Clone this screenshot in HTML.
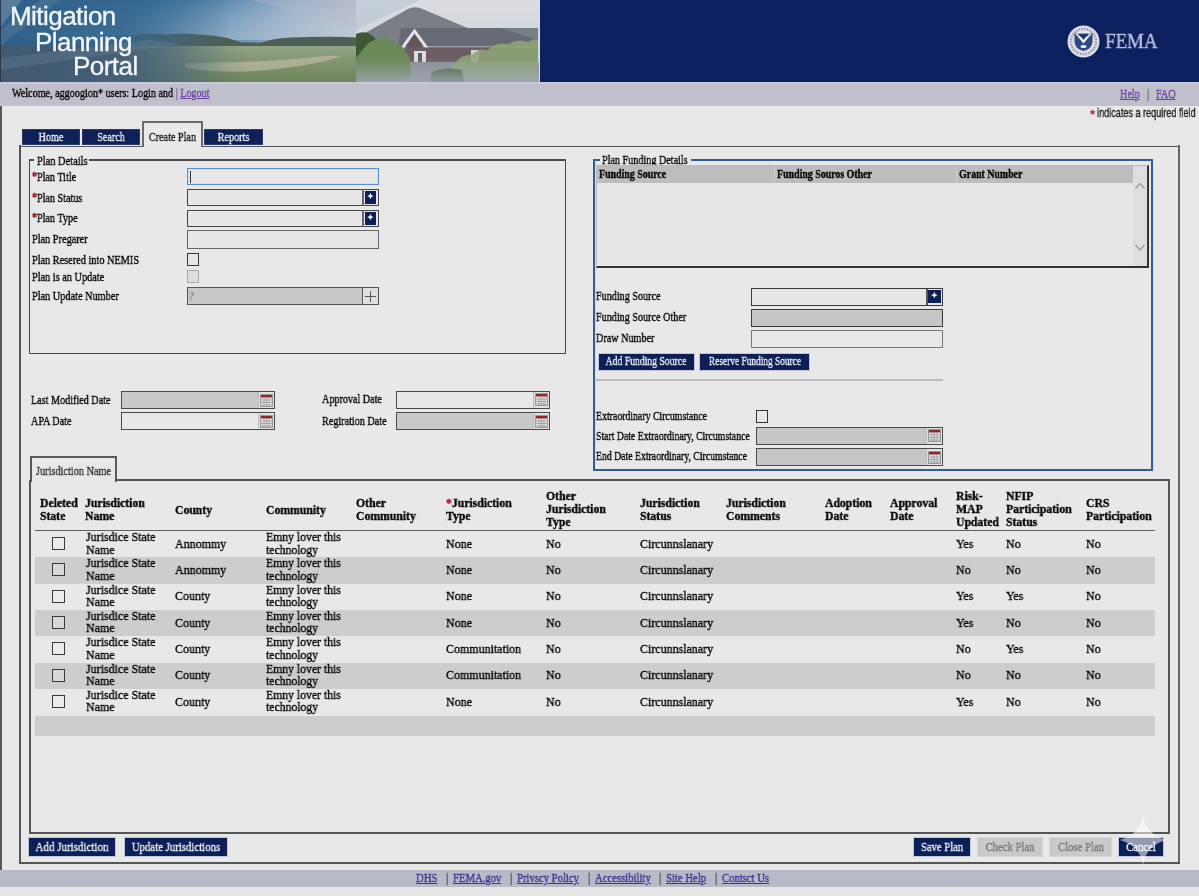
<!DOCTYPE html><html><head><meta charset="utf-8"><title>Mitigation Planning Portal</title><style>
*{margin:0;padding:0;box-sizing:border-box}
html,body{width:1199px;height:896px;overflow:hidden;background:#e8e8e8;position:relative}
.t{position:absolute;white-space:nowrap;line-height:13px;transform-origin:0 0;-webkit-text-stroke:0.35px currentColor;will-change:transform}
.b{position:absolute}
a{color:inherit}
</style></head><body><div class="b" style="left:0;top:0;width:1199px;height:82px;background:#0c2060"></div>
<svg class="b" style="left:0;top:0" width="540" height="82" viewBox="0 0 540 82">
<defs>
<linearGradient id="sky" x1="0" y1="0" x2="1" y2="0">
<stop offset="0" stop-color="#23618e"/><stop offset="0.4" stop-color="#2f6e9c"/><stop offset="0.62" stop-color="#5a88ae"/><stop offset="0.82" stop-color="#93adc4"/><stop offset="1" stop-color="#b2bccb"/></linearGradient>
<linearGradient id="skyv" x1="0" y1="0" x2="0" y2="1">
<stop offset="0" stop-color="#ffffff" stop-opacity="0"/><stop offset="1" stop-color="#c8d2dc" stop-opacity="0.45"/></linearGradient>
<linearGradient id="field" x1="0" y1="0" x2="0" y2="1">
<stop offset="0" stop-color="#94a486"/><stop offset="0.4" stop-color="#839670"/><stop offset="1" stop-color="#6c845a"/></linearGradient>
<linearGradient id="leftshade" x1="0" y1="0" x2="1" y2="0">
<stop offset="0" stop-color="#2e5f88" stop-opacity="1"/><stop offset="0.55" stop-color="#36668e" stop-opacity="0.85"/><stop offset="1" stop-color="#3c6a90" stop-opacity="0"/></linearGradient>
<linearGradient id="leftbot" x1="0" y1="0" x2="1" y2="0">
<stop offset="0" stop-color="#45576c" stop-opacity="0.85"/><stop offset="0.55" stop-color="#4a5c6c" stop-opacity="0.6"/><stop offset="1" stop-color="#5a6a70" stop-opacity="0"/></linearGradient>
<linearGradient id="hsky" x1="0" y1="0" x2="0" y2="1">
<stop offset="0" stop-color="#dcdde2"/><stop offset="1" stop-color="#c3cfd6"/></linearGradient>
<linearGradient id="fog" x1="0" y1="0" x2="0" y2="1">
<stop offset="0" stop-color="#9aa2aa" stop-opacity="0"/><stop offset="1" stop-color="#a0a8b0" stop-opacity="0.85"/></linearGradient>
</defs>
<rect x="0" y="0" width="356" height="82" fill="url(#sky)"/>
<rect x="0" y="0" width="356" height="40" fill="url(#skyv)"/>
<path d="M110 36 Q122 34 135 35 Q150 33 165 34.5 Q185 33 200 34.5 Q215 35 228 38 Q236 41 242 42.5 L262 42.5 Q272 38.5 290 37.5 Q320 36.5 345 37 L356 37.5 L356 46 L110 46 Z" fill="#4e5f55"/>
<path d="M250 0 L356 0 L356 30 Q320 16 250 0 Z" fill="#b8b8cc" opacity="0.3"/>
<rect x="100" y="46" width="256" height="36" fill="url(#field)"/>
<path d="M185 63 Q250 63 305 58 Q330 55 342 56 Q310 67 255 71 Q215 73 185 68 Z" fill="#bdbaa4" opacity="0.7"/>
<rect x="0" y="0" width="230" height="82" fill="url(#leftshade)"/>
<rect x="0" y="46" width="250" height="36" fill="url(#leftbot)"/>
<path d="M0 0 L22 0 L0 28 Z" fill="#8aa0b4" opacity="0.45"/>
<path d="M0 30 L40 0 L60 0 L0 46 Z" fill="#7e97ad" opacity="0.25"/>
<path d="M0 58 L150 40 L180 44 L0 70 Z" fill="#8aa4ba" opacity="0.18"/>
<rect x="356" y="0" width="184" height="82" fill="url(#hsky)"/>
<path d="M356 0 L420 0 L356 30 Z" fill="#a8bccb" opacity="0.45"/>
<path d="M356 38 L408 9 Q414 6 420 8 L470 29 L538 29 L538 82 L356 82 Z" fill="#7a7e85"/>
<path d="M401 28 L538 28 L538 47 L398 47 Z" fill="#666a74"/>
<path d="M500 28 L538 28 L538 40 Z" fill="#7c8a8c" opacity="0.7"/>
<rect x="398" y="46" width="140" height="1.5" fill="#9a9ca4"/>
<path d="M400 48.5 L414.5 28.5 L429 48.5 L425.5 48.5 L414.5 33.5 L403.5 48.5 Z" fill="#e4e6ea"/>
<path d="M406 48 L414.5 34.5 L423 48 Z" fill="#6a5256"/>
<rect x="405" y="47.5" width="133" height="16" fill="#6c5e64"/>
<rect x="414" y="51" width="12" height="15" fill="#dcdce2"/>
<rect x="418" y="53" width="4" height="12" fill="#5a5e6a"/>
<rect x="471" y="50" width="8" height="13" fill="#d4d4da"/>
<rect x="356" y="62" width="184" height="20" fill="#8c929c"/>
<path d="M356 34 Q362 31 368 33 Q376 36 378 46 Q380 56 374 64 Q366 70 356 70 Z" fill="#3e5836"/>
<path d="M364 48 Q370 40 380 38 Q388 36 394 42 Q402 44 406 52 Q412 58 410 66 Q414 74 404 82 L356 82 L356 58 Z" fill="#6a8858"/>
<path d="M456 62 Q462 54 472 55 Q478 48 488 50 Q496 42 508 44 Q518 38 528 42 Q534 38 538 40 L538 82 L452 82 Q448 70 456 62 Z" fill="#8ea676" opacity="0.85"/>
<path d="M432 72 Q446 66 462 70 L464 82 L430 82 Z" fill="#44603c"/>
<rect x="356" y="58" width="184" height="24" fill="url(#fog)"/>
<rect x="539" y="0" width="1" height="82" fill="#d8dce8"/>
</svg>
<div class="b" style="left:0;top:0;width:1px;height:82px;background:#2a3a4a"></div>
<div class="t" style="left:10px;top:3px;font-size:26px;font-weight:400;color:#f2f5f8;font-family:'Liberation Sans',serif;transform:scaleX(1);line-height:26px;letter-spacing:-0.55px;">Mitigation</div>
<div class="t" style="left:35px;top:28.5px;font-size:26px;font-weight:400;color:#f2f5f8;font-family:'Liberation Sans',serif;transform:scaleX(1);line-height:26px;letter-spacing:-0.55px;">Planning</div>
<div class="t" style="left:73px;top:53px;font-size:26px;font-weight:400;color:#f2f5f8;font-family:'Liberation Sans',serif;transform:scaleX(1);line-height:26px;letter-spacing:-0.55px;">Portal</div>
<svg class="b" style="left:1067px;top:24.5px" width="33" height="33" viewBox="0 0 33 33">
<circle cx="16.5" cy="16.5" r="16" fill="#dde2ec"/>
<circle cx="16.5" cy="16.5" r="12.6" fill="none" stroke="#a89aa6" stroke-width="2.6" stroke-dasharray="1.6 1.1"/>
<circle cx="16.5" cy="16" r="9.8" fill="#e6e8f0"/>
<path d="M7.5 8.5 L25.5 8.5 L25.5 17 Q25 24 16.5 26 Q8 24 7.5 17 Z" fill="#2c4a80"/>
<path d="M8.5 9 L16.5 18.5 L24.5 9 L21.8 8.5 L16.5 15 L11.2 8.5 Z" fill="#f2f4f8"/>
<path d="M10 9.5 L23 9.5 L16.5 13 Z" fill="#1c2f60"/>
<ellipse cx="16.5" cy="21.5" rx="3" ry="1.6" fill="#eef0f6"/>
</svg>
<div class="t" style="left:1105px;top:31px;font-size:21px;font-weight:400;color:#b9c1d9;font-family:'Liberation Serif',serif;transform:scaleX(0.9);line-height:21px;">FEMA</div>
<div class="b" style="left:0px;top:82px;width:1199px;height:24px;background:#bfc0cb"></div>
<div class="b" style="left:0px;top:82px;width:1199px;height:2px;background:#c5c9d9"></div>
<div class="t" style="left:12px;top:86px;font-size:13px;font-weight:400;color:#000;font-family:'Liberation Serif',serif;transform:scaleX(0.78);">Welcome, aggoogion* users: Login and <span style="color:#6a5a9a">|</span> <u style="color:#6b3fa0">Logout</u></div>
<div class="t" style="left:1120px;top:87px;font-size:13px;font-weight:400;color:#000;font-family:'Liberation Serif',serif;transform:scaleX(0.78);"><u style="color:#6b3fa0">Help</u></div>
<div class="t" style="left:1147px;top:87px;font-size:13px;font-weight:400;color:#000;font-family:'Liberation Serif',serif;transform:scaleX(0.78);"><span style="color:#555">|</span></div>
<div class="t" style="left:1156px;top:87px;font-size:13px;font-weight:400;color:#000;font-family:'Liberation Serif',serif;transform:scaleX(0.78);"><u style="color:#6b3fa0">FAQ</u></div>
<div class="b" style="left:0px;top:106px;width:2px;height:780px;background:#5a5a5a"></div>
<div class="t" style="left:1090px;top:107px;font-size:13px;font-weight:400;color:#000;font-family:'Liberation Serif',serif;transform:scaleX(0.78);"><span style="color:#a01828">*</span></div>
<div class="t" style="left:1097px;top:106px;font-size:13px;font-weight:400;color:#1a1a1a;font-family:'Liberation Sans',serif;transform:scaleX(0.7);">indicates a required field</div>
<div class="b" style="left:22px;top:128.8px;width:58px;height:16.69999999999999px;background:#0e2157;border:1px solid #2a3a6a"></div>
<div class="t" style="left:22px;top:130px;width:58px;text-align:center;font-size:13px;color:#e8ecf4;font-family:'Liberation Serif',serif;transform:scaleX(0.78);transform-origin:50% 0">Home</div>
<div class="b" style="left:82px;top:128.8px;width:58px;height:16.69999999999999px;background:#0e2157;border:1px solid #2a3a6a"></div>
<div class="t" style="left:82px;top:130px;width:58px;text-align:center;font-size:13px;color:#e8ecf4;font-family:'Liberation Serif',serif;transform:scaleX(0.78);transform-origin:50% 0">Search</div>
<div class="b" style="left:204px;top:128.8px;width:59px;height:16.69999999999999px;background:#0e2157;border:1px solid #2a3a6a"></div>
<div class="t" style="left:204px;top:130px;width:59px;text-align:center;font-size:13px;color:#e8ecf4;font-family:'Liberation Serif',serif;transform:scaleX(0.78);transform-origin:50% 0">Reports</div>
<div class="b" style="left:142px;top:121px;width:61px;height:26px;background:#e9e9e9;border:2px solid #6a6a6a;border-bottom:none"></div>
<div class="t" style="left:142px;top:130px;width:61px;text-align:center;font-size:13px;color:#1a1a1a;font-family:'Liberation Serif',serif;transform:scaleX(0.78);transform-origin:50% 0">Create Plan</div>
<div class="b" style="left:19px;top:145.5px;width:123px;height:1.5px;background:#555"></div>
<div class="b" style="left:203px;top:145.5px;width:977px;height:1.5px;background:#555"></div>
<div class="b" style="left:19px;top:145px;width:2px;height:719px;background:#555"></div>
<div class="b" style="left:1178px;top:145px;width:2px;height:719px;background:#666"></div>
<div class="b" style="left:19px;top:862px;width:1161px;height:2px;background:#555"></div>
<div class="b" style="left:29px;top:160px;width:537px;height:193.5px;border:1.7px solid #4a4a4a;border-top:none"></div>
<div class="b" style="left:29px;top:159px;width:5px;height:2px;background:#4a4a4a"></div>
<div class="b" style="left:89px;top:159.3px;width:477px;height:1.6999999999999886px;background:#4a4a4a"></div>
<div class="t" style="left:37px;top:154px;font-size:13px;font-weight:400;color:#000;font-family:'Liberation Serif',serif;transform:scaleX(0.8);">Plan Details</div>
<div class="t" style="left:31.5px;top:169px;font-size:13px;font-weight:700;color:#000;font-family:'Liberation Serif',serif;transform:scaleX(0.8);"><span style="color:#8a1828">*</span></div>
<div class="t" style="left:37px;top:170px;font-size:13px;font-weight:400;color:#000;font-family:'Liberation Serif',serif;transform:scaleX(0.78);">Plan Title</div>
<div class="t" style="left:31.5px;top:189.5px;font-size:13px;font-weight:700;color:#000;font-family:'Liberation Serif',serif;transform:scaleX(0.8);"><span style="color:#8a1828">*</span></div>
<div class="t" style="left:37px;top:190.5px;font-size:13px;font-weight:400;color:#000;font-family:'Liberation Serif',serif;transform:scaleX(0.78);">Plan Status</div>
<div class="t" style="left:31.5px;top:210px;font-size:13px;font-weight:700;color:#000;font-family:'Liberation Serif',serif;transform:scaleX(0.8);"><span style="color:#8a1828">*</span></div>
<div class="t" style="left:37px;top:211px;font-size:13px;font-weight:400;color:#000;font-family:'Liberation Serif',serif;transform:scaleX(0.78);">Plan Type</div>
<div class="t" style="left:31.8px;top:231.6px;font-size:13px;font-weight:400;color:#000;font-family:'Liberation Serif',serif;transform:scaleX(0.79);">Plan Pregarer</div>
<div class="t" style="left:31.8px;top:252.5px;font-size:13px;font-weight:400;color:#000;font-family:'Liberation Serif',serif;transform:scaleX(0.79);">Plan Resered into NEMIS</div>
<div class="t" style="left:31.8px;top:269.5px;font-size:13px;font-weight:400;color:#000;font-family:'Liberation Serif',serif;transform:scaleX(0.79);">Plan is an Update</div>
<div class="t" style="left:31.8px;top:288.5px;font-size:13px;font-weight:400;color:#000;font-family:'Liberation Serif',serif;transform:scaleX(0.79);">Plan Update Number</div>
<div class="b" style="left:187px;top:168px;width:192px;height:17px;border:1px solid #5b8fd0;box-shadow:inset 0 0 0 1px #cfe0f4;background:#e8e8e8"></div>
<div class="b" style="left:190px;top:171px;width:1px;height:12px;background:#333"></div>
<div class="b" style="left:187px;top:189px;width:192px;height:17px;border:1.6px solid #444;background:#e6e6e6"></div>
<div class="b" style="left:362px;top:189px;width:1.5px;height:17px;background:#666"></div>
<div class="b" style="left:365px;top:191px;width:11px;height:13px;background:#0d1f57"></div>
<div class="t" style="left:365px;top:193px;width:11px;text-align:center;font-size:8px;line-height:8px;color:#fff;font-family:'Liberation Sans'">&#10022;</div>
<div class="b" style="left:187px;top:209.5px;width:192px;height:17.5px;border:1.6px solid #444;background:#e6e6e6"></div>
<div class="b" style="left:362px;top:209.5px;width:1.5px;height:17.5px;background:#666"></div>
<div class="b" style="left:365px;top:211.5px;width:11px;height:13.5px;background:#0d1f57"></div>
<div class="t" style="left:365px;top:213.5px;width:11px;text-align:center;font-size:8px;line-height:8px;color:#fff;font-family:'Liberation Sans'">&#10022;</div>
<div class="b" style="left:187px;top:230px;width:192px;height:18.5px;border:1px solid #666;background:#e6e6e6"></div>
<div class="b" style="left:187px;top:253px;width:12px;height:13px;border:1.5px solid #333;background:#e8e8e8"></div>
<div class="b" style="left:187px;top:270px;width:12px;height:13px;border:1px solid #aaa;background:#dedede"></div>
<div class="b" style="left:187px;top:287px;width:192px;height:18px;border:1px solid #555;background:#c8c8c8"></div>
<div class="b" style="left:362px;top:287px;width:17px;height:18px;border:1px solid #555;background:#e0e0e0"></div>
<div class="t" style="left:189px;top:290px;font-size:12px;font-weight:400;color:#888;font-family:'Liberation Serif',serif;transform:scaleX(0.8);font-style:italic">?</div>
<div class="b" style="left:365px;top:296px;width:11px;height:1px;background:#555"></div>
<div class="b" style="left:370px;top:291px;width:1px;height:11px;background:#555"></div>
<div class="t" style="left:30.5px;top:392.6px;font-size:13px;font-weight:400;color:#000;font-family:'Liberation Serif',serif;transform:scaleX(0.78);">Last Modified Date</div>
<div class="t" style="left:30.5px;top:413.6px;font-size:13px;font-weight:400;color:#000;font-family:'Liberation Serif',serif;transform:scaleX(0.78);">APA Date</div>
<div class="b" style="left:121px;top:391px;width:154px;height:17.5px;border:1.5px solid #4a4a4a;background:#c8c8c8"></div>
<div class="b" style="left:258px;top:392px;width:16px;height:15.5px;background:#e2e2e2;border-left:1px solid #bbb"></div>
<svg class="b" style="left:260px;top:393.5px" width="13" height="13" viewBox="0 0 13 13">
<rect x="0.5" y="0.5" width="12" height="12" fill="#e4e4e4" stroke="#999" stroke-width="1"/>
<rect x="1" y="1" width="11" height="2.5" fill="#8a2a30"/>
<path d="M1 6 H12 M1 8.5 H12 M1 11 H12 M4 3.5 V12 M6.5 3.5 V12 M9 3.5 V12" stroke="#999" stroke-width="0.8"/>
</svg>
<div class="b" style="left:121px;top:412px;width:154px;height:17.5px;border:1.5px solid #4a4a4a;background:#e8e8e8"></div>
<div class="b" style="left:258px;top:413px;width:16px;height:15.5px;background:#e2e2e2;border-left:1px solid #bbb"></div>
<svg class="b" style="left:260px;top:414.5px" width="13" height="13" viewBox="0 0 13 13">
<rect x="0.5" y="0.5" width="12" height="12" fill="#e4e4e4" stroke="#999" stroke-width="1"/>
<rect x="1" y="1" width="11" height="2.5" fill="#8a2a30"/>
<path d="M1 6 H12 M1 8.5 H12 M1 11 H12 M4 3.5 V12 M6.5 3.5 V12 M9 3.5 V12" stroke="#999" stroke-width="0.8"/>
</svg>
<div class="t" style="left:322px;top:392.4px;font-size:13px;font-weight:400;color:#000;font-family:'Liberation Serif',serif;transform:scaleX(0.78);">Approval Date</div>
<div class="t" style="left:322px;top:414px;font-size:13px;font-weight:400;color:#000;font-family:'Liberation Serif',serif;transform:scaleX(0.78);">Regiration Date</div>
<div class="b" style="left:396px;top:390.5px;width:154px;height:18.0px;border:1.5px solid #4a4a4a;background:#e8e8e8"></div>
<div class="b" style="left:533px;top:391.5px;width:16px;height:16.0px;background:#e2e2e2;border-left:1px solid #bbb"></div>
<svg class="b" style="left:535px;top:393.0px" width="13" height="13" viewBox="0 0 13 13">
<rect x="0.5" y="0.5" width="12" height="12" fill="#e4e4e4" stroke="#999" stroke-width="1"/>
<rect x="1" y="1" width="11" height="2.5" fill="#8a2a30"/>
<path d="M1 6 H12 M1 8.5 H12 M1 11 H12 M4 3.5 V12 M6.5 3.5 V12 M9 3.5 V12" stroke="#999" stroke-width="0.8"/>
</svg>
<div class="b" style="left:396px;top:412px;width:154px;height:18px;border:1.5px solid #4a4a4a;background:#c8c8c8"></div>
<div class="b" style="left:533px;top:413px;width:16px;height:16px;background:#e2e2e2;border-left:1px solid #bbb"></div>
<svg class="b" style="left:535px;top:414.5px" width="13" height="13" viewBox="0 0 13 13">
<rect x="0.5" y="0.5" width="12" height="12" fill="#e4e4e4" stroke="#999" stroke-width="1"/>
<rect x="1" y="1" width="11" height="2.5" fill="#8a2a30"/>
<path d="M1 6 H12 M1 8.5 H12 M1 11 H12 M4 3.5 V12 M6.5 3.5 V12 M9 3.5 V12" stroke="#999" stroke-width="0.8"/>
</svg>
<div class="b" style="left:593px;top:160px;width:560px;height:311px;border:2px solid #2f5f95;border-top:none;box-shadow:inset 1px 0 0 #cfe0f0, 1px 0 0 #cfe0f0"></div>
<div class="b" style="left:593px;top:159px;width:7px;height:2px;background:#2f5f95"></div>
<div class="b" style="left:691px;top:159px;width:462px;height:2px;background:#2f5f95"></div>
<div class="t" style="left:602px;top:153.3px;font-size:13px;font-weight:400;color:#000;font-family:'Liberation Serif',serif;transform:scaleX(0.78);">Plan Funding Details</div>
<div class="b" style="left:596px;top:165px;width:553px;height:102.5px;border-left:1px solid #bbb;border-top:1px solid #bbb;border-right:2px solid #333;border-bottom:2px solid #333;background:#e6e6e6"></div>
<div class="b" style="left:597px;top:166px;width:536px;height:17px;background:#bdbdbd"></div>
<div class="b" style="left:774px;top:166px;width:1px;height:17px;background:#cfcfcf"></div>
<div class="b" style="left:956px;top:166px;width:1px;height:17px;background:#cfcfcf"></div>
<div class="b" style="left:1133px;top:166px;width:14px;height:100px;background:#dedede"></div>
<div class="t" style="left:599.3px;top:166.8px;font-size:13px;font-weight:700;color:#000;font-family:'Liberation Serif',serif;transform:scaleX(0.76);">Funding Source</div>
<div class="t" style="left:776.8px;top:166.8px;font-size:13px;font-weight:700;color:#000;font-family:'Liberation Serif',serif;transform:scaleX(0.76);">Funding Souros Other</div>
<div class="t" style="left:959.3px;top:166.8px;font-size:13px;font-weight:700;color:#000;font-family:'Liberation Serif',serif;transform:scaleX(0.76);">Grant Number</div>
<svg class="b" style="left:1134px;top:181px" width="12" height="72" viewBox="0 0 12 72"><path d="M1.5 7.5 L6 2.5 L10.5 7.5" fill="none" stroke="#999" stroke-width="1.2"/><path d="M1.5 64 L6 69 L10.5 64" fill="none" stroke="#999" stroke-width="1.2"/></svg>
<div class="t" style="left:596.3px;top:289px;font-size:13px;font-weight:400;color:#000;font-family:'Liberation Serif',serif;transform:scaleX(0.78);">Funding Source</div>
<div class="t" style="left:596.3px;top:310px;font-size:13px;font-weight:400;color:#000;font-family:'Liberation Serif',serif;transform:scaleX(0.78);">Funding Source Other</div>
<div class="t" style="left:596.3px;top:330.7px;font-size:13px;font-weight:400;color:#000;font-family:'Liberation Serif',serif;transform:scaleX(0.78);">Draw Number</div>
<div class="b" style="left:751px;top:287.5px;width:192px;height:18.0px;border:1.5px solid #3a3a3a;background:#e6e6e6"></div>
<div class="b" style="left:926px;top:288.5px;width:1.5px;height:16.0px;background:#555"></div>
<div class="b" style="left:928px;top:290px;width:13px;height:13px;background:#0d1f57"></div>
<div class="t" style="left:928px;top:292px;width:13px;text-align:center;font-size:8px;line-height:8px;color:#fff;font-family:'Liberation Sans'">&#10022;</div>
<div class="b" style="left:751px;top:308.5px;width:192px;height:18.0px;border:1.5px solid #3a3a3a;background:#c6c6c6"></div>
<div class="b" style="left:751px;top:329.5px;width:192px;height:18.0px;border:1px solid #777;background:#e8e8e8"></div>
<div class="b" style="left:598px;top:352.5px;width:96.5px;height:18.5px;background:#0d1f57;border:1px solid #c0c6d6"></div>
<div class="t" style="left:496.25px;top:354.0px;width:300px;text-align:center;font-size:13px;color:#e8ecf4;font-family:'Liberation Serif',serif;transform:scaleX(0.745);transform-origin:50% 0">Add Funding Source</div>
<div class="b" style="left:699px;top:352.5px;width:111px;height:18.5px;background:#0d1f57;border:1px solid #c0c6d6"></div>
<div class="t" style="left:604.5px;top:354.0px;width:300px;text-align:center;font-size:13px;color:#e8ecf4;font-family:'Liberation Serif',serif;transform:scaleX(0.72);transform-origin:50% 0">Reserve Funding Source</div>
<div class="b" style="left:596px;top:379px;width:347px;height:2px;background:#bcbcbc"></div>
<div class="t" style="left:596px;top:408.7px;font-size:13px;font-weight:400;color:#000;font-family:'Liberation Serif',serif;transform:scaleX(0.755);">Extraordinary Circumstance</div>
<div class="t" style="left:596px;top:428.8px;font-size:13px;font-weight:400;color:#000;font-family:'Liberation Serif',serif;transform:scaleX(0.75);">Start Date Extraordinary, Circumstance</div>
<div class="t" style="left:596px;top:449.4px;font-size:13px;font-weight:400;color:#000;font-family:'Liberation Serif',serif;transform:scaleX(0.75);">End Date Extraordinary, Circumstance</div>
<div class="b" style="left:756px;top:410px;width:12px;height:12.5px;border:1.5px solid #333;background:#e8e8e8"></div>
<div class="b" style="left:756px;top:426.5px;width:187px;height:18.0px;border:1.5px solid #4a4a4a;background:#c6c6c6"></div>
<div class="b" style="left:926px;top:427.5px;width:16px;height:16.0px;background:#e2e2e2;border-left:1px solid #bbb"></div>
<svg class="b" style="left:928px;top:429.0px" width="13" height="13" viewBox="0 0 13 13">
<rect x="0.5" y="0.5" width="12" height="12" fill="#e4e4e4" stroke="#999" stroke-width="1"/>
<rect x="1" y="1" width="11" height="2.5" fill="#8a2a30"/>
<path d="M1 6 H12 M1 8.5 H12 M1 11 H12 M4 3.5 V12 M6.5 3.5 V12 M9 3.5 V12" stroke="#999" stroke-width="0.8"/>
</svg>
<div class="b" style="left:756px;top:448px;width:187px;height:17.5px;border:1.5px solid #4a4a4a;background:#c6c6c6"></div>
<div class="b" style="left:926px;top:449px;width:16px;height:15.5px;background:#e2e2e2;border-left:1px solid #bbb"></div>
<svg class="b" style="left:928px;top:450.5px" width="13" height="13" viewBox="0 0 13 13">
<rect x="0.5" y="0.5" width="12" height="12" fill="#e4e4e4" stroke="#999" stroke-width="1"/>
<rect x="1" y="1" width="11" height="2.5" fill="#8a2a30"/>
<path d="M1 6 H12 M1 8.5 H12 M1 11 H12 M4 3.5 V12 M6.5 3.5 V12 M9 3.5 V12" stroke="#999" stroke-width="0.8"/>
</svg>
<div class="b" style="left:30px;top:455.5px;width:87px;height:26.5px;border:2px solid #5a5a5a;border-bottom:none;background:#e8e8e8"></div>
<div class="t" style="left:35.8px;top:463.5px;font-size:13px;font-weight:400;color:#333;font-family:'Liberation Serif',serif;transform:scaleX(0.79);">Jurisdiction Name</div>
<div class="b" style="left:116px;top:479px;width:1054px;height:2px;background:#555"></div>
<div class="b" style="left:29px;top:480px;width:2px;height:354px;background:#555"></div>
<div class="b" style="left:1168px;top:479px;width:2px;height:355px;background:#555"></div>
<div class="b" style="left:29px;top:832px;width:1141px;height:2px;background:#555"></div>
<div class="t" style="left:39.5px;top:496px;font-size:13px;font-weight:700;color:#000;font-family:'Liberation Serif',serif;transform:scaleX(0.9);">Deleted</div>
<div class="t" style="left:39.5px;top:509px;font-size:13px;font-weight:700;color:#000;font-family:'Liberation Serif',serif;transform:scaleX(0.9);">State</div>
<div class="t" style="left:85px;top:496px;font-size:13px;font-weight:700;color:#000;font-family:'Liberation Serif',serif;transform:scaleX(0.9);">Jurisdiction</div>
<div class="t" style="left:85px;top:509px;font-size:13px;font-weight:700;color:#000;font-family:'Liberation Serif',serif;transform:scaleX(0.9);">Name</div>
<div class="t" style="left:175px;top:503px;font-size:13px;font-weight:700;color:#000;font-family:'Liberation Serif',serif;transform:scaleX(0.9);">County</div>
<div class="t" style="left:266px;top:503px;font-size:13px;font-weight:700;color:#000;font-family:'Liberation Serif',serif;transform:scaleX(0.9);">Community</div>
<div class="t" style="left:356px;top:496px;font-size:13px;font-weight:700;color:#000;font-family:'Liberation Serif',serif;transform:scaleX(0.9);">Other</div>
<div class="t" style="left:356px;top:509px;font-size:13px;font-weight:700;color:#000;font-family:'Liberation Serif',serif;transform:scaleX(0.9);">Community</div>
<div class="t" style="left:446px;top:496px;font-size:13px;font-weight:700;color:#000;font-family:'Liberation Serif',serif;transform:scaleX(0.9);"><span style="color:#a01828">*</span>Jurisdiction</div>
<div class="t" style="left:446px;top:509px;font-size:13px;font-weight:700;color:#000;font-family:'Liberation Serif',serif;transform:scaleX(0.9);">Type</div>
<div class="t" style="left:546px;top:489px;font-size:13px;font-weight:700;color:#000;font-family:'Liberation Serif',serif;transform:scaleX(0.9);">Other</div>
<div class="t" style="left:546px;top:502.4px;font-size:13px;font-weight:700;color:#000;font-family:'Liberation Serif',serif;transform:scaleX(0.9);">Jurisdiction</div>
<div class="t" style="left:546px;top:515.3px;font-size:13px;font-weight:700;color:#000;font-family:'Liberation Serif',serif;transform:scaleX(0.9);">Type</div>
<div class="t" style="left:640px;top:496px;font-size:13px;font-weight:700;color:#000;font-family:'Liberation Serif',serif;transform:scaleX(0.9);">Jurisdiction</div>
<div class="t" style="left:640px;top:509px;font-size:13px;font-weight:700;color:#000;font-family:'Liberation Serif',serif;transform:scaleX(0.9);">Status</div>
<div class="t" style="left:726px;top:496px;font-size:13px;font-weight:700;color:#000;font-family:'Liberation Serif',serif;transform:scaleX(0.9);">Jurisdiction</div>
<div class="t" style="left:726px;top:509px;font-size:13px;font-weight:700;color:#000;font-family:'Liberation Serif',serif;transform:scaleX(0.9);">Comments</div>
<div class="t" style="left:825px;top:496px;font-size:13px;font-weight:700;color:#000;font-family:'Liberation Serif',serif;transform:scaleX(0.9);">Adoption</div>
<div class="t" style="left:825px;top:509px;font-size:13px;font-weight:700;color:#000;font-family:'Liberation Serif',serif;transform:scaleX(0.9);">Date</div>
<div class="t" style="left:890px;top:496px;font-size:13px;font-weight:700;color:#000;font-family:'Liberation Serif',serif;transform:scaleX(0.9);">Approval</div>
<div class="t" style="left:890px;top:509px;font-size:13px;font-weight:700;color:#000;font-family:'Liberation Serif',serif;transform:scaleX(0.9);">Date</div>
<div class="t" style="left:955.5px;top:489px;font-size:13px;font-weight:700;color:#000;font-family:'Liberation Serif',serif;transform:scaleX(0.9);">Risk-</div>
<div class="t" style="left:955.5px;top:502.4px;font-size:13px;font-weight:700;color:#000;font-family:'Liberation Serif',serif;transform:scaleX(0.9);">MAP</div>
<div class="t" style="left:955.5px;top:515.3px;font-size:13px;font-weight:700;color:#000;font-family:'Liberation Serif',serif;transform:scaleX(0.9);">Updated</div>
<div class="t" style="left:1006px;top:489px;font-size:13px;font-weight:700;color:#000;font-family:'Liberation Serif',serif;transform:scaleX(0.9);">NFIP</div>
<div class="t" style="left:1006px;top:502.4px;font-size:13px;font-weight:700;color:#000;font-family:'Liberation Serif',serif;transform:scaleX(0.9);">Participation</div>
<div class="t" style="left:1006px;top:515.3px;font-size:13px;font-weight:700;color:#000;font-family:'Liberation Serif',serif;transform:scaleX(0.9);">Status</div>
<div class="t" style="left:1086px;top:496px;font-size:13px;font-weight:700;color:#000;font-family:'Liberation Serif',serif;transform:scaleX(0.9);">CRS</div>
<div class="t" style="left:1086px;top:509px;font-size:13px;font-weight:700;color:#000;font-family:'Liberation Serif',serif;transform:scaleX(0.9);">Participation</div>
<div class="b" style="left:35px;top:530px;width:1120px;height:1.2999999999999545px;background:#606060"></div>
<div class="b" style="left:52px;top:537.0px;width:13px;height:13.0px;border:1.5px solid #3a3a3a;background:#ececec"></div>
<div class="t" style="left:85.5px;top:530.0px;font-size:13px;font-weight:400;color:#000;font-family:'Liberation Serif',serif;transform:scaleX(0.92);">Jurisdice State</div>
<div class="t" style="left:85.5px;top:542.5px;font-size:13px;font-weight:400;color:#000;font-family:'Liberation Serif',serif;transform:scaleX(0.92);">Name</div>
<div class="t" style="left:175px;top:536.8px;font-size:13px;font-weight:400;color:#000;font-family:'Liberation Serif',serif;transform:scaleX(0.92);">Annommy</div>
<div class="t" style="left:266px;top:530.0px;font-size:13px;font-weight:400;color:#000;font-family:'Liberation Serif',serif;transform:scaleX(0.9);">Emny lover this</div>
<div class="t" style="left:266px;top:542.5px;font-size:13px;font-weight:400;color:#000;font-family:'Liberation Serif',serif;transform:scaleX(0.9);">technology</div>
<div class="t" style="left:446px;top:536.8px;font-size:13px;font-weight:400;color:#000;font-family:'Liberation Serif',serif;transform:scaleX(0.92);">None</div>
<div class="t" style="left:546px;top:536.8px;font-size:13px;font-weight:400;color:#000;font-family:'Liberation Serif',serif;transform:scaleX(0.92);">No</div>
<div class="t" style="left:640px;top:536.8px;font-size:13px;font-weight:400;color:#000;font-family:'Liberation Serif',serif;transform:scaleX(0.92);">Circunnslanary</div>
<div class="t" style="left:955.5px;top:536.8px;font-size:13px;font-weight:400;color:#000;font-family:'Liberation Serif',serif;transform:scaleX(0.92);">Yes</div>
<div class="t" style="left:1006px;top:536.8px;font-size:13px;font-weight:400;color:#000;font-family:'Liberation Serif',serif;transform:scaleX(0.92);">No</div>
<div class="t" style="left:1086px;top:536.8px;font-size:13px;font-weight:400;color:#000;font-family:'Liberation Serif',serif;transform:scaleX(0.92);">No</div>
<div class="b" style="left:35px;top:557.3px;width:1120px;height:26.300000000000068px;background:#cdcdcd"></div>
<div class="b" style="left:52px;top:563.3px;width:13px;height:13.0px;border:1.5px solid #3a3a3a;background:#d8d8d8"></div>
<div class="t" style="left:85.5px;top:556.3px;font-size:13px;font-weight:400;color:#000;font-family:'Liberation Serif',serif;transform:scaleX(0.92);">Jurisdice State</div>
<div class="t" style="left:85.5px;top:568.8px;font-size:13px;font-weight:400;color:#000;font-family:'Liberation Serif',serif;transform:scaleX(0.92);">Name</div>
<div class="t" style="left:175px;top:563.0999999999999px;font-size:13px;font-weight:400;color:#000;font-family:'Liberation Serif',serif;transform:scaleX(0.92);">Annommy</div>
<div class="t" style="left:266px;top:556.3px;font-size:13px;font-weight:400;color:#000;font-family:'Liberation Serif',serif;transform:scaleX(0.9);">Emny lover this</div>
<div class="t" style="left:266px;top:568.8px;font-size:13px;font-weight:400;color:#000;font-family:'Liberation Serif',serif;transform:scaleX(0.9);">technology</div>
<div class="t" style="left:446px;top:563.0999999999999px;font-size:13px;font-weight:400;color:#000;font-family:'Liberation Serif',serif;transform:scaleX(0.92);">None</div>
<div class="t" style="left:546px;top:563.0999999999999px;font-size:13px;font-weight:400;color:#000;font-family:'Liberation Serif',serif;transform:scaleX(0.92);">No</div>
<div class="t" style="left:640px;top:563.0999999999999px;font-size:13px;font-weight:400;color:#000;font-family:'Liberation Serif',serif;transform:scaleX(0.92);">Circunnslanary</div>
<div class="t" style="left:955.5px;top:563.0999999999999px;font-size:13px;font-weight:400;color:#000;font-family:'Liberation Serif',serif;transform:scaleX(0.92);">No</div>
<div class="t" style="left:1006px;top:563.0999999999999px;font-size:13px;font-weight:400;color:#000;font-family:'Liberation Serif',serif;transform:scaleX(0.92);">No</div>
<div class="t" style="left:1086px;top:563.0999999999999px;font-size:13px;font-weight:400;color:#000;font-family:'Liberation Serif',serif;transform:scaleX(0.92);">No</div>
<div class="b" style="left:52px;top:589.6px;width:13px;height:13.0px;border:1.5px solid #3a3a3a;background:#ececec"></div>
<div class="t" style="left:85.5px;top:582.6px;font-size:13px;font-weight:400;color:#000;font-family:'Liberation Serif',serif;transform:scaleX(0.92);">Jurisdice State</div>
<div class="t" style="left:85.5px;top:595.1px;font-size:13px;font-weight:400;color:#000;font-family:'Liberation Serif',serif;transform:scaleX(0.92);">Name</div>
<div class="t" style="left:175px;top:589.4px;font-size:13px;font-weight:400;color:#000;font-family:'Liberation Serif',serif;transform:scaleX(0.92);">County</div>
<div class="t" style="left:266px;top:582.6px;font-size:13px;font-weight:400;color:#000;font-family:'Liberation Serif',serif;transform:scaleX(0.9);">Emny lover this</div>
<div class="t" style="left:266px;top:595.1px;font-size:13px;font-weight:400;color:#000;font-family:'Liberation Serif',serif;transform:scaleX(0.9);">technology</div>
<div class="t" style="left:446px;top:589.4px;font-size:13px;font-weight:400;color:#000;font-family:'Liberation Serif',serif;transform:scaleX(0.92);">None</div>
<div class="t" style="left:546px;top:589.4px;font-size:13px;font-weight:400;color:#000;font-family:'Liberation Serif',serif;transform:scaleX(0.92);">No</div>
<div class="t" style="left:640px;top:589.4px;font-size:13px;font-weight:400;color:#000;font-family:'Liberation Serif',serif;transform:scaleX(0.92);">Circunnslanary</div>
<div class="t" style="left:955.5px;top:589.4px;font-size:13px;font-weight:400;color:#000;font-family:'Liberation Serif',serif;transform:scaleX(0.92);">Yes</div>
<div class="t" style="left:1006px;top:589.4px;font-size:13px;font-weight:400;color:#000;font-family:'Liberation Serif',serif;transform:scaleX(0.92);">Yes</div>
<div class="t" style="left:1086px;top:589.4px;font-size:13px;font-weight:400;color:#000;font-family:'Liberation Serif',serif;transform:scaleX(0.92);">No</div>
<div class="b" style="left:35px;top:609.9px;width:1120px;height:26.300000000000068px;background:#cdcdcd"></div>
<div class="b" style="left:52px;top:615.9px;width:13px;height:13.0px;border:1.5px solid #3a3a3a;background:#d8d8d8"></div>
<div class="t" style="left:85.5px;top:608.9px;font-size:13px;font-weight:400;color:#000;font-family:'Liberation Serif',serif;transform:scaleX(0.92);">Jurisdice State</div>
<div class="t" style="left:85.5px;top:621.4px;font-size:13px;font-weight:400;color:#000;font-family:'Liberation Serif',serif;transform:scaleX(0.92);">Name</div>
<div class="t" style="left:175px;top:615.6999999999999px;font-size:13px;font-weight:400;color:#000;font-family:'Liberation Serif',serif;transform:scaleX(0.92);">County</div>
<div class="t" style="left:266px;top:608.9px;font-size:13px;font-weight:400;color:#000;font-family:'Liberation Serif',serif;transform:scaleX(0.9);">Emny lover this</div>
<div class="t" style="left:266px;top:621.4px;font-size:13px;font-weight:400;color:#000;font-family:'Liberation Serif',serif;transform:scaleX(0.9);">technology</div>
<div class="t" style="left:446px;top:615.6999999999999px;font-size:13px;font-weight:400;color:#000;font-family:'Liberation Serif',serif;transform:scaleX(0.92);">None</div>
<div class="t" style="left:546px;top:615.6999999999999px;font-size:13px;font-weight:400;color:#000;font-family:'Liberation Serif',serif;transform:scaleX(0.92);">No</div>
<div class="t" style="left:640px;top:615.6999999999999px;font-size:13px;font-weight:400;color:#000;font-family:'Liberation Serif',serif;transform:scaleX(0.92);">Circunnslanary</div>
<div class="t" style="left:955.5px;top:615.6999999999999px;font-size:13px;font-weight:400;color:#000;font-family:'Liberation Serif',serif;transform:scaleX(0.92);">Yes</div>
<div class="t" style="left:1006px;top:615.6999999999999px;font-size:13px;font-weight:400;color:#000;font-family:'Liberation Serif',serif;transform:scaleX(0.92);">No</div>
<div class="t" style="left:1086px;top:615.6999999999999px;font-size:13px;font-weight:400;color:#000;font-family:'Liberation Serif',serif;transform:scaleX(0.92);">No</div>
<div class="b" style="left:52px;top:642.2px;width:13px;height:13.0px;border:1.5px solid #3a3a3a;background:#ececec"></div>
<div class="t" style="left:85.5px;top:635.2px;font-size:13px;font-weight:400;color:#000;font-family:'Liberation Serif',serif;transform:scaleX(0.92);">Jurisdice State</div>
<div class="t" style="left:85.5px;top:647.7px;font-size:13px;font-weight:400;color:#000;font-family:'Liberation Serif',serif;transform:scaleX(0.92);">Name</div>
<div class="t" style="left:175px;top:642.0px;font-size:13px;font-weight:400;color:#000;font-family:'Liberation Serif',serif;transform:scaleX(0.92);">County</div>
<div class="t" style="left:266px;top:635.2px;font-size:13px;font-weight:400;color:#000;font-family:'Liberation Serif',serif;transform:scaleX(0.9);">Emny lover this</div>
<div class="t" style="left:266px;top:647.7px;font-size:13px;font-weight:400;color:#000;font-family:'Liberation Serif',serif;transform:scaleX(0.9);">technology</div>
<div class="t" style="left:446px;top:642.0px;font-size:13px;font-weight:400;color:#000;font-family:'Liberation Serif',serif;transform:scaleX(0.92);">Communitation</div>
<div class="t" style="left:546px;top:642.0px;font-size:13px;font-weight:400;color:#000;font-family:'Liberation Serif',serif;transform:scaleX(0.92);">No</div>
<div class="t" style="left:640px;top:642.0px;font-size:13px;font-weight:400;color:#000;font-family:'Liberation Serif',serif;transform:scaleX(0.92);">Circunnslanary</div>
<div class="t" style="left:955.5px;top:642.0px;font-size:13px;font-weight:400;color:#000;font-family:'Liberation Serif',serif;transform:scaleX(0.92);">No</div>
<div class="t" style="left:1006px;top:642.0px;font-size:13px;font-weight:400;color:#000;font-family:'Liberation Serif',serif;transform:scaleX(0.92);">Yes</div>
<div class="t" style="left:1086px;top:642.0px;font-size:13px;font-weight:400;color:#000;font-family:'Liberation Serif',serif;transform:scaleX(0.92);">No</div>
<div class="b" style="left:35px;top:662.5px;width:1120px;height:26.299999999999955px;background:#cdcdcd"></div>
<div class="b" style="left:52px;top:668.5px;width:13px;height:13.0px;border:1.5px solid #3a3a3a;background:#d8d8d8"></div>
<div class="t" style="left:85.5px;top:661.5px;font-size:13px;font-weight:400;color:#000;font-family:'Liberation Serif',serif;transform:scaleX(0.92);">Jurisdice State</div>
<div class="t" style="left:85.5px;top:674.0px;font-size:13px;font-weight:400;color:#000;font-family:'Liberation Serif',serif;transform:scaleX(0.92);">Name</div>
<div class="t" style="left:175px;top:668.3px;font-size:13px;font-weight:400;color:#000;font-family:'Liberation Serif',serif;transform:scaleX(0.92);">County</div>
<div class="t" style="left:266px;top:661.5px;font-size:13px;font-weight:400;color:#000;font-family:'Liberation Serif',serif;transform:scaleX(0.9);">Emny lover this</div>
<div class="t" style="left:266px;top:674.0px;font-size:13px;font-weight:400;color:#000;font-family:'Liberation Serif',serif;transform:scaleX(0.9);">technology</div>
<div class="t" style="left:446px;top:668.3px;font-size:13px;font-weight:400;color:#000;font-family:'Liberation Serif',serif;transform:scaleX(0.92);">Communitation</div>
<div class="t" style="left:546px;top:668.3px;font-size:13px;font-weight:400;color:#000;font-family:'Liberation Serif',serif;transform:scaleX(0.92);">No</div>
<div class="t" style="left:640px;top:668.3px;font-size:13px;font-weight:400;color:#000;font-family:'Liberation Serif',serif;transform:scaleX(0.92);">Circunnslanary</div>
<div class="t" style="left:955.5px;top:668.3px;font-size:13px;font-weight:400;color:#000;font-family:'Liberation Serif',serif;transform:scaleX(0.92);">No</div>
<div class="t" style="left:1006px;top:668.3px;font-size:13px;font-weight:400;color:#000;font-family:'Liberation Serif',serif;transform:scaleX(0.92);">No</div>
<div class="t" style="left:1086px;top:668.3px;font-size:13px;font-weight:400;color:#000;font-family:'Liberation Serif',serif;transform:scaleX(0.92);">No</div>
<div class="b" style="left:52px;top:694.8px;width:13px;height:13.0px;border:1.5px solid #3a3a3a;background:#ececec"></div>
<div class="t" style="left:85.5px;top:687.8px;font-size:13px;font-weight:400;color:#000;font-family:'Liberation Serif',serif;transform:scaleX(0.92);">Jurisdice State</div>
<div class="t" style="left:85.5px;top:700.3px;font-size:13px;font-weight:400;color:#000;font-family:'Liberation Serif',serif;transform:scaleX(0.92);">Name</div>
<div class="t" style="left:175px;top:694.5999999999999px;font-size:13px;font-weight:400;color:#000;font-family:'Liberation Serif',serif;transform:scaleX(0.92);">County</div>
<div class="t" style="left:266px;top:687.8px;font-size:13px;font-weight:400;color:#000;font-family:'Liberation Serif',serif;transform:scaleX(0.9);">Emny lover this</div>
<div class="t" style="left:266px;top:700.3px;font-size:13px;font-weight:400;color:#000;font-family:'Liberation Serif',serif;transform:scaleX(0.9);">technology</div>
<div class="t" style="left:446px;top:694.5999999999999px;font-size:13px;font-weight:400;color:#000;font-family:'Liberation Serif',serif;transform:scaleX(0.92);">None</div>
<div class="t" style="left:546px;top:694.5999999999999px;font-size:13px;font-weight:400;color:#000;font-family:'Liberation Serif',serif;transform:scaleX(0.92);">No</div>
<div class="t" style="left:640px;top:694.5999999999999px;font-size:13px;font-weight:400;color:#000;font-family:'Liberation Serif',serif;transform:scaleX(0.92);">Circunnslanary</div>
<div class="t" style="left:955.5px;top:694.5999999999999px;font-size:13px;font-weight:400;color:#000;font-family:'Liberation Serif',serif;transform:scaleX(0.92);">Yes</div>
<div class="t" style="left:1006px;top:694.5999999999999px;font-size:13px;font-weight:400;color:#000;font-family:'Liberation Serif',serif;transform:scaleX(0.92);">No</div>
<div class="t" style="left:1086px;top:694.5999999999999px;font-size:13px;font-weight:400;color:#000;font-family:'Liberation Serif',serif;transform:scaleX(0.92);">No</div>
<div class="b" style="left:35px;top:715.5px;width:1120px;height:20.0px;background:#cdcdcd"></div>
<div class="b" style="left:28px;top:836.5px;width:88px;height:20.0px;background:#0d1f57;border:1px solid #c0c6d6"></div>
<div class="t" style="left:-78.0px;top:839.5px;width:300px;text-align:center;font-size:13px;color:#e8ecf4;font-family:'Liberation Serif',serif;transform:scaleX(0.845);transform-origin:50% 0">Add Jurisdiction</div>
<div class="b" style="left:124px;top:836.5px;width:103.5px;height:20.0px;background:#0d1f57;border:1px solid #c0c6d6"></div>
<div class="t" style="left:25.75px;top:839.5px;width:300px;text-align:center;font-size:13px;color:#e8ecf4;font-family:'Liberation Serif',serif;transform:scaleX(0.83);transform-origin:50% 0">Update Jurisdictions</div>
<div class="b" style="left:913px;top:836.5px;width:58px;height:20.0px;background:#0d1f57;border:1px solid #c0c6d6"></div>
<div class="t" style="left:792.0px;top:839.5px;width:300px;text-align:center;font-size:13px;color:#e8ecf4;font-family:'Liberation Serif',serif;transform:scaleX(0.82);transform-origin:50% 0">Save Plan</div>
<div class="b" style="left:977px;top:836.5px;width:66px;height:20.0px;background:#c9c9c9;border:1px solid #d6d6d6"></div>
<div class="t" style="left:860.0px;top:839.5px;width:300px;text-align:center;font-size:13px;color:#7a7a7a;font-family:'Liberation Serif',serif;transform:scaleX(0.82);transform-origin:50% 0">Check Plan</div>
<div class="b" style="left:1049px;top:836.5px;width:63px;height:20.0px;background:#c9c9c9;border:1px solid #d6d6d6"></div>
<div class="t" style="left:930.5px;top:839.5px;width:300px;text-align:center;font-size:13px;color:#7a7a7a;font-family:'Liberation Serif',serif;transform:scaleX(0.82);transform-origin:50% 0">Close Plan</div>
<div class="b" style="left:1118px;top:836.5px;width:46px;height:20.0px;background:#0d1f57;border:1px solid #c0c6d6"></div>
<div class="t" style="left:991.0px;top:839.5px;width:300px;text-align:center;font-size:13px;color:#e8ecf4;font-family:'Liberation Serif',serif;transform:scaleX(0.82);transform-origin:50% 0">Cancel</div>
<svg class="b" style="left:1119px;top:815px" width="48" height="50" viewBox="0 0 48 50"><path d="M24 0 Q27 19 47 25 Q27 31 24 50 Q21 31 1 25 Q21 19 24 0 Z" fill="#ffffff" opacity="0.55"/></svg>
<div class="b" style="left:0px;top:870px;width:1199px;height:17px;background:#b8bac8"></div>
<div class="b" style="left:0px;top:887px;width:1199px;height:9px;background:#e6e6e6"></div>
<div class="t" style="left:415.7px;top:871px;font-size:13px;font-weight:400;color:#3a3592;font-family:'Liberation Serif',serif;transform:scaleX(0.82);"><u>DHS</u></div>
<div class="t" style="left:452.7px;top:871px;font-size:13px;font-weight:400;color:#3a3592;font-family:'Liberation Serif',serif;transform:scaleX(0.82);"><u>FEMA.gov</u></div>
<div class="t" style="left:516.7px;top:871px;font-size:13px;font-weight:400;color:#3a3592;font-family:'Liberation Serif',serif;transform:scaleX(0.82);"><u>Privscy Policy</u></div>
<div class="t" style="left:595px;top:871px;font-size:13px;font-weight:400;color:#3a3592;font-family:'Liberation Serif',serif;transform:scaleX(0.82);"><u>Accessibility</u></div>
<div class="t" style="left:665.7px;top:871px;font-size:13px;font-weight:400;color:#3a3592;font-family:'Liberation Serif',serif;transform:scaleX(0.82);"><u>Site Help</u></div>
<div class="t" style="left:721.7px;top:871px;font-size:13px;font-weight:400;color:#3a3592;font-family:'Liberation Serif',serif;transform:scaleX(0.82);"><u>Contsct Us</u></div>
<div class="t" style="left:446px;top:871px;font-size:13px;font-weight:400;color:#333;font-family:'Liberation Serif',serif;transform:scaleX(0.8);">|</div>
<div class="t" style="left:510px;top:871px;font-size:13px;font-weight:400;color:#333;font-family:'Liberation Serif',serif;transform:scaleX(0.8);">|</div>
<div class="t" style="left:588px;top:871px;font-size:13px;font-weight:400;color:#333;font-family:'Liberation Serif',serif;transform:scaleX(0.8);">|</div>
<div class="t" style="left:659px;top:871px;font-size:13px;font-weight:400;color:#333;font-family:'Liberation Serif',serif;transform:scaleX(0.8);">|</div>
<div class="t" style="left:715px;top:871px;font-size:13px;font-weight:400;color:#333;font-family:'Liberation Serif',serif;transform:scaleX(0.8);">|</div></body></html>
